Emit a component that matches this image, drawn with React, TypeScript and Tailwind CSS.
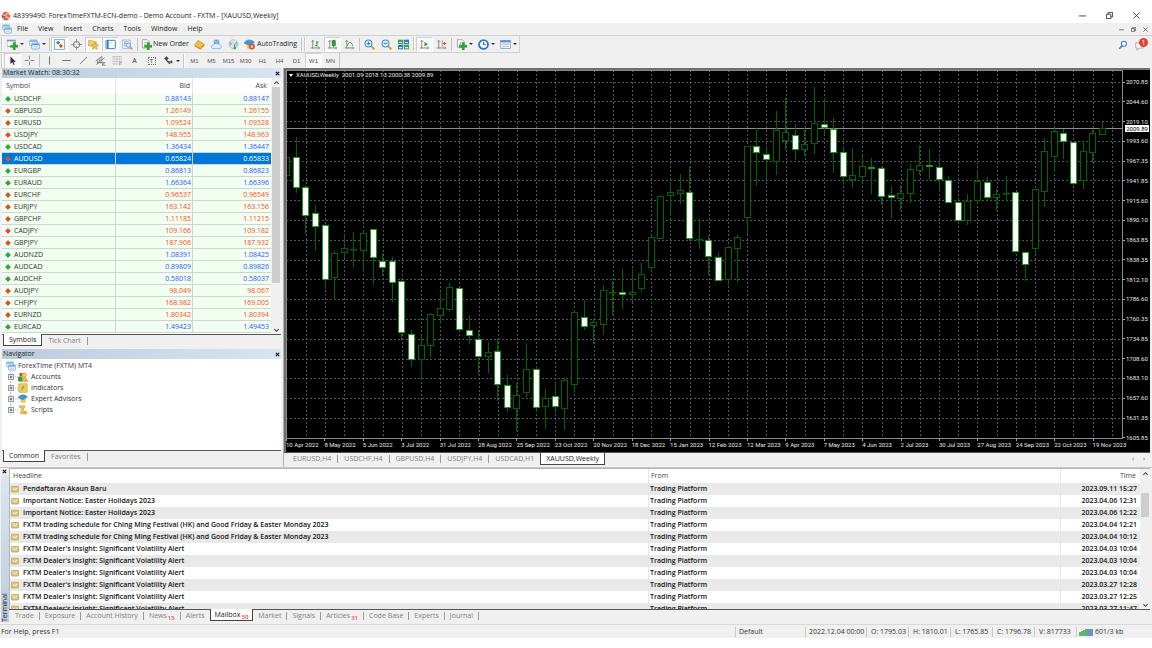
import {Fragment, useState} from 'react'
import type {ReactNode} from 'react'
import clsx from 'clsx'

type Quote = [symbol: string, bid: string, ask: string, up: boolean]
// high, body top, body bottom, low, filled (down week)
type Candle = [number, number, number, number, number]

const quotes: Quote[] = [
    ['USDCHF', '0.88143', '0.88147', true],
    ['GBPUSD', '1.26149', '1.26155', false],
    ['EURUSD', '1.09524', '1.09528', false],
    ['USDJPY', '148.955', '148.963', false],
    ['USDCAD', '1.36434', '1.36447', true],
    ['AUDUSD', '0.65824', '0.65833', false],
    ['EURGBP', '0.86813', '0.86823', true],
    ['EURAUD', '1.66364', '1.66396', true],
    ['EURCHF', '0.96537', '0.96549', false],
    ['EURJPY', '163.142', '163.156', false],
    ['GBPCHF', '1.11185', '1.11215', false],
    ['CADJPY', '109.166', '109.182', false],
    ['GBPJPY', '187.906', '187.932', false],
    ['AUDNZD', '1.08391', '1.08425', true],
    ['AUDCAD', '0.89809', '0.89826', true],
    ['AUDCHF', '0.58018', '0.58037', true],
    ['AUDJPY', '98.049', '98.067', false],
    ['CHFJPY', '168.982', '169.005', false],
    ['EURNZD', '1.80342', '1.80394', false],
    ['EURCAD', '1.49423', '1.49453', true],
]

const mails = [
    ['Pendaftaran Akaun Baru', '2023.09.11 15:27'],
    ['Important Notice: Easter Holidays 2023', '2023.04.06 12:31'],
    ['Important Notice: Easter Holidays 2023', '2023.04.06 12:22'],
    ['FXTM trading schedule for Ching Ming Festival (HK) and Good Friday & Easter Monday 2023', '2023.04.04 12:21'],
    ['FXTM trading schedule for Ching Ming Festival (HK) and Good Friday & Easter Monday 2023', '2023.04.04 10:12'],
    ["FXTM Dealer's Insight: Significant Volatility Alert", '2023.04.03 10:04'],
    ["FXTM Dealer's Insight: Significant Volatility Alert", '2023.04.03 10:04'],
    ["FXTM Dealer's Insight: Significant Volatility Alert", '2023.04.03 10:04'],
    ["FXTM Dealer's Insight: Significant Volatility Alert", '2023.03.27 12:28'],
    ["FXTM Dealer's Insight: Significant Volatility Alert", '2023.03.27 12:25'],
    ["FXTM Dealer's Insight: Significant Volatility Alert", '2023.03.27 11:47'],
]

const prices = [
    '2070.85', '2044.60', '2019.10', '1993.60', '1967.35', '1941.85', '1915.60', '1890.10', '1863.85', '1838.35',
    '1812.10', '1786.60', '1760.35', '1734.85', '1708.60', '1683.10', '1657.60', '1631.35', '1605.85',
]

const dates = [
    '10 Apr 2022', '8 May 2022', '5 Jun 2022', '3 Jul 2022', '31 Jul 2022', '28 Aug 2022', '25 Sep 2022', '23 Oct 2022',
    '20 Nov 2022', '18 Dec 2022', '15 Jan 2023', '12 Feb 2023', '12 Mar 2023', '9 Apr 2023', '7 May 2023', '4 Jun 2023',
    '2 Jul 2023', '30 Jul 2023', '27 Aug 2023', '24 Sep 2023', '22 Oct 2023', '19 Nov 2023',
]

const candles: Candle[] = [
    [150, 157, 176, 182, 0], [137, 157, 188, 193, 1], [185, 187, 216, 234, 1], [205, 213, 227, 251, 1],
    [224, 225, 280, 289, 1], [251, 253, 278, 300, 0], [235, 248, 253, 258, 0], [232, 249, 249, 267, 0],
    [231, 233, 251, 271, 0], [229, 229, 258, 285, 1], [253, 261, 268, 276, 1], [257, 261, 283, 302, 1],
    [279, 281, 333, 341, 1], [330, 334, 360, 367, 1], [335, 345, 360, 380, 0], [313, 314, 346, 357, 0],
    [293, 308, 316, 324, 0], [283, 287, 310, 312, 0], [288, 288, 330, 331, 1], [315, 330, 336, 344, 1],
    [330, 339, 357, 374, 1], [342, 352, 357, 373, 0], [339, 351, 385, 401, 1], [375, 385, 408, 412, 1],
    [383, 395, 409, 431, 0], [343, 369, 393, 397, 0], [366, 369, 408, 412, 1], [389, 398, 407, 429, 0],
    [383, 396, 407, 413, 1], [378, 380, 409, 430, 0], [310, 312, 385, 393, 0], [300, 317, 327, 330, 1],
    [319, 322, 326, 344, 0], [285, 290, 325, 335, 0], [281, 292, 293, 315, 0], [269, 292, 295, 309, 1],
    [269, 292, 295, 302, 0], [263, 274, 289, 292, 0], [235, 237, 268, 271, 0], [195, 196, 239, 239, 0],
    [183, 192, 196, 215, 0], [174, 190, 194, 204, 0], [167, 192, 239, 241, 1], [219, 239, 240, 249, 0],
    [235, 240, 257, 275, 1], [252, 257, 281, 281, 1], [246, 247, 280, 285, 0], [235, 237, 249, 282, 0],
    [146, 146, 218, 234, 0], [128, 146, 153, 186, 1], [145, 154, 160, 179, 1], [111, 130, 162, 175, 0],
    [98, 132, 141, 150, 0], [124, 135, 150, 160, 1], [128, 144, 150, 156, 0], [87, 123, 144, 154, 0],
    [98, 124, 128, 135, 1], [118, 129, 153, 173, 1], [146, 152, 177, 185, 1], [148, 175, 180, 188, 0],
    [156, 166, 177, 183, 0], [158, 167, 169, 194, 1], [167, 168, 197, 205, 1], [186, 195, 198, 218, 1],
    [185, 193, 199, 211, 0], [164, 169, 194, 203, 0], [145, 165, 171, 175, 0], [149, 165, 167, 180, 1],
    [157, 167, 180, 192, 1], [176, 180, 203, 203, 1], [199, 202, 221, 223, 1], [194, 201, 221, 225, 0],
    [171, 181, 201, 203, 0], [177, 182, 198, 200, 1], [189, 194, 198, 211, 0], [176, 193, 194, 202, 0],
    [192, 192, 252, 253, 1], [251, 252, 265, 281, 1], [189, 189, 249, 255, 0], [138, 151, 192, 207, 0],
    [128, 131, 157, 172, 0], [129, 133, 142, 159, 1], [142, 142, 184, 185, 1], [141, 151, 181, 189, 0],
    [130, 133, 153, 163, 0], [122, 128, 135, 135, 0],
]

const plus = <path d="M10 6h3v4h4v3h-4v4h-3v-4H6v-3h4z" transform="translate(-1 -1)" fill="#22b02c" stroke="#0f8a1c" strokeWidth=".6"/>

const axes = <path d="M4 2v12M2 4l2-2 2 2M1 13h13M12 11l2 2-2 2" fill="none" stroke="#777" strokeWidth="1.2"/>

const glass = (
    <>
        <path d="M10 10l5 5" stroke="#d9a520" strokeWidth="3"/>
        <circle cx="6.5" cy="6.5" r="5" fill="#d5ebfb" stroke="#3d8fd1" strokeWidth="1.5"/>
    </>
)

const icons: Record<string, ReactNode> = {
    app: (
        <>
            <circle cx="8" cy="8" r="7" fill="#e2674a"/>
            <path d="M2 5l5 4 3-6 5 3M4 13l4-4 6 3" fill="none" stroke="#fff" strokeWidth="1.4"/>
            <path d="M1 8l6 1-2 5" fill="none" stroke="#8c2c1c" strokeWidth="1"/>
        </>
    ),
    windows: (
        <>
            <rect x="1" y="1.5" width="11" height="8" rx="1" fill="#e8f3fc" stroke="#6aa7d8"/>
            <path d="M1.5 3h10" stroke="#6aa7d8" strokeWidth="2"/>
            <rect x="4" y="6" width="11" height="8.5" rx="1" fill="#fff" stroke="#4f94cf"/>
            <path d="M4.5 8h10" stroke="#4f94cf" strokeWidth="2"/>
            <path d="M6 12l2-1 2 1 3-1" fill="none" stroke="#6aa7d8"/>
        </>
    ),
    newChart: (
        <>
            <rect x="0" y="1.5" width="12" height="9.5" fill="#fff" stroke="#7a94ad"/>
            <path d="M0 2.5h12" stroke="#7a94ad" strokeWidth="2"/>
            {plus}
        </>
    ),
    watch: (
        <>
            <rect x="1" y="1" width="14" height="14" fill="#fff" stroke="#5a9bd5" strokeWidth="1.2"/>
            <path d="M6 2.5L9 5.500 6 8.500 3 5.500z" fill="#22a52c"/>
            <path d="M10 7l3 3-3 3-3-3z" fill="#e0401c"/>
        </>
    ),
    target: (
        <>
            <circle cx="8" cy="8" r="4.5" fill="none" stroke="#888" strokeWidth="1.5"/>
            <path d="M8 0v6M8 10v6M0 8h6M10 8h6" stroke="#888" strokeWidth="1.3"/>
        </>
    ),
    navigator: (
        <>
            <path d="M1 2h5l1 2h5v6H1z" fill="#f3d36b" stroke="#c79a2b"/>
            <path d="M10 5l1.6 3.5 3.9.3-3 2.4 1 3.8-3.5-2-3.5 2 1-3.8-3-2.4 3.900-.3z" fill="#f5c33b" stroke="#b98a18" strokeWidth=".7"/>
        </>
    ),
    terminal: (
        <>
            <rect x="1.5" y="2" width="13.5" height="12" rx="1" fill="#fff" stroke="#2f7fc4" strokeWidth="1.4"/>
            <path d="M4 2v12" stroke="#2f7fc4" strokeWidth="2.5"/>
            <path d="M7 5h3" stroke="#8ab8e0"/>
        </>
    ),
    tester: (
        <>
            <rect x="1" y="1.5" width="11" height="12" fill="#eef5fb" stroke="#8ba6c0"/>
            <path d="M3 4h7M3 6.5h4M3 9h3M4 3v8" stroke="#8ba6c0"/>
            <path d="M11.5 11.500l3.500 3.500" stroke="#d9a520" strokeWidth="2.4"/>
            <circle cx="9.5" cy="9" r="3.2" fill="#cfe6f8" stroke="#4a92cf"/>
        </>
    ),
    order: (
        <>
            <path d="M2 1h7l3 3v9H2z" fill="#fff" stroke="#888"/>
            <path d="M4 5h5M4 7.5h4" stroke="#aaa"/>
            {plus}
        </>
    ),
    editor: (
        <>
            <path d="M6 2l9 6-6 6-8-5z" fill="#f0c03e" stroke="#b98516"/>
            <path d="M1 9l8 5 6-6v2l-6 5.500-8-5z" fill="#c98f1a"/>
        </>
    ),
    cloud: (
        <>
            <path d="M4 1h8v8H4z" fill="#58a9e6"/>
            <path d="M5 2l3 3 3-3" stroke="#d9eefc" fill="none"/>
            <path d="M3 14a2.500 2.500 0 010-5 5 4 0 019-.5A2.800 2.800 0 0113 14z" fill="#e3eef8" stroke="#7ea9cf"/>
        </>
    ),
    signal: (
        <>
            <circle cx="8" cy="7.5" r="6.500" fill="#dfe7ee" stroke="#9eb0bf"/>
            <path d="M4 10a5 5 0 010-6M12 4a5 5 0 010 6M6 9a3 3 0 010-4M10 5a3 3 0 010 4" fill="none" stroke="#6d93b5"/>
            <path d="M9 6l3 9H8z" fill="#33a93c"/>
        </>
    ),
    expert: (
        <>
            <path d="M3 8h10l-1 6H5z" fill="#f2c65b"/>
            <path d="M0 6c3-6 12-6 15-1L8 9z" fill="#3f96d9" stroke="#2a73ad" strokeWidth=".7"/>
        </>
    ),
    auto: (
        <>
            <path d="M3 8h10l-1 6H5z" fill="#f2c65b"/>
            <path d="M0 6c3-6 12-6 15-1L8 9z" fill="#3f96d9" stroke="#2a73ad" strokeWidth=".7"/>
            <circle cx="11.500" cy="11" r="4.300" fill="#e04a20"/>
            <rect x="10" y="9.500" width="3" height="3" fill="#fff"/>
        </>
    ),
    bars: <>{axes}<path d="M10 3v8M10 4.500h2.500M7.500 9.500H10" fill="none" stroke="#1e9b2a" strokeWidth="1.4"/></>,
    candle: <>{axes}<path d="M9.500 1v11" stroke="#14801f"/><rect x="7.500" y="2.500" width="4.500" height="7" fill="#1fae2c" stroke="#14801f"/></>,
    line: <>{axes}<path d="M5 10c2-7 5-7 8 0" fill="none" stroke="#33a93c" strokeWidth="1.4"/></>,
    zoomIn: <>{glass}<path d="M4 6.500h5M6.500 4v5" stroke="#2674b8" strokeWidth="1.3"/></>,
    zoomOut: <>{glass}<path d="M4 6.500h5" stroke="#2674b8" strokeWidth="1.3"/></>,
    tile: (
        <>
            <rect x="0" y="1" width="7.500" height="6.500" fill="#3aa544"/>
            <rect x="8.500" y="1" width="7.500" height="6.500" fill="#2f78c8"/>
            <rect x="0" y="8.500" width="7.500" height="6.500" fill="#2f78c8"/>
            <rect x="8.500" y="8.500" width="7.500" height="6.500" fill="#3aa544"/>
            <path d="M1.500 5h4.500M10 5h4.500M1.500 12.500h4.500M10 12.500h4.500" stroke="#e6f2e8" strokeWidth="1.600"/>
        </>
    ),
    scroll: <>{axes}<path d="M8 4l5 3.500L8 11z" fill="#2aa336"/></>,
    shift: <>{axes}<path d="M9 2v9" stroke="#777"/><path d="M15 6.500h-4M13 4.500l-2.500 2 2.500 2" fill="none" stroke="#d13b2a" strokeWidth="1.3"/></>,
    indicator: (
        <>
            <path d="M2 1h7l3 3v8H2z" fill="#fff" stroke="#888"/>
            <path d="M5 10c1 0 1-6 3-6" fill="none" stroke="#555"/>
            {plus}
        </>
    ),
    clock: (
        <>
            <circle cx="8" cy="8" r="6.500" fill="#f4faff" stroke="#1e7ad0" strokeWidth="2.600"/>
            <path d="M8 4.500V8h3" fill="none" stroke="#333" strokeWidth="1.2"/>
        </>
    ),
    template: (
        <>
            <rect x="1" y="2" width="14" height="12" fill="#fff" stroke="#4f94cf"/>
            <path d="M1 3.500h14" stroke="#4f94cf" strokeWidth="3"/>
            <path d="M3 8l3-1 3 1 4-1" fill="none" stroke="#d45"/>
            <path d="M3 12l3-1.500 3 1 4-1.500" fill="none" stroke="#3a9"/>
        </>
    ),
    cursor: <path d="M5 2v11l2.700-2.500 1.800 4 1.700-.8-1.800-3.700H13z" fill="#333"/>,
    cross: <path d="M8 1v5.500M8 9.500V15M1 8h5.500M9.500 8H15" stroke="#777" strokeWidth="1.3"/>,
    vline: <path d="M8 2v12" stroke="#666" strokeWidth="1.3"/>,
    hline: <path d="M2 8h12" stroke="#666" strokeWidth="1.3"/>,
    trend: <path d="M3 13L13 3" stroke="#666" strokeWidth="1.3"/>,
    channel: <path d="M1 9l9-7M2 14L14 4M4 6v7M7 4v8M10 2v8M3 11h8M15 11h-4v4h4M11 13h3" fill="none" stroke="#666"/>,
    fibo: <path d="M1 2.500h13M1 6h13M1 9.500h13M1 13h8M11 15v-4h4M11 13h3" fill="none" stroke="#777" strokeDasharray="1.5 .8"/>,
    arrows: <path d="M2 5l3-3 3 3-3 3zM5 7c0 4 3 4 5 3M10 10l2-2 2 2-2 2zM7 11l3-2v4z" fill="#444" stroke="#444" strokeWidth=".6"/>,
    search: <><path d="M2 14l5-5" stroke="#2a7fd4" strokeWidth="2.4"/><circle cx="9.500" cy="6" r="4" fill="#fff" stroke="#2a7fd4" strokeWidth="1.7"/></>,
    accounts: (
        <>
            <circle cx="5" cy="4" r="3" fill="#d94c2c"/>
            <circle cx="10" cy="5" r="3.500" fill="#f2cf68" stroke="#b88f24"/>
            <path d="M5 15c0-8 10-8 10.500 0z" fill="#efc14a" stroke="#b88f24"/>
            <rect x="0" y="7" width="7" height="8" rx="2" fill="#2ca338"/>
        </>
    ),
    func: (
        <>
            <rect x="1" y="1" width="14" height="14" rx="2" fill="#ecca66" stroke="#cfa93e"/>
            <path d="M10 4c-3 0-2 8-5 8M6 7.500h4" fill="none" stroke="#8f7020"/>
        </>
    ),
    script: (
        <>
            <path d="M2 1h9v3H9v7h3v3H4v-3h1V4H2z" fill="#eac458" stroke="#b88f24" strokeWidth=".7"/>
            <path d="M12 9l3 3-3 3-3-3z" fill="#f0b92e" stroke="#b88f24" strokeWidth=".7"/>
        </>
    ),
    mail: (
        <>
            <rect x="1" y="3" width="14" height="11" rx="1" fill="#dcc77a" stroke="#b59b48" strokeWidth="1.4"/>
            <path d="M2.500 5.500L8 9.500l5.500-4" fill="none" stroke="#fff" strokeWidth="1.5"/>
        </>
    ),
}

function Icon({name, className = 'size-[11px]'}: { name: string; className?: string }) {
    return <svg viewBox="0 0 16 16" className={clsx('shrink-0', className)} aria-hidden="true">{icons[name]}</svg>
}

function Tool({icon, label, pressed, drop, children}: {
    icon?: string; label: string; pressed?: boolean; drop?: boolean; children?: ReactNode
}) {
    return (
        <button
            type="button"
            aria-label={label}
            className={clsx(
                'flex h-[15px] shrink-0 items-center justify-center gap-[2px] border',
                drop ? 'w-[22px]' : 'w-[17px]',
                pressed ? 'border-[#d0d0d0] border-r-white border-b-white bg-[#f8f8f8]' : 'border-transparent',
            )}
        >
            {icon && <Icon name={icon}/>}
            {children}
            {drop && <span className="border-x-2 border-t-2 border-x-transparent border-t-[#333]"/>}
        </button>
    )
}

function Sep() {
    return <span className="mx-px h-[13px] w-px shrink-0 bg-[#c4c4c4]"/>
}

function Grip() {
    return <span className="mx-px h-[14px] w-[2px] shrink-0 border-x border-l-[#c8c8c8] border-r-white"/>
}

function PaneTitle({children}: { children: ReactNode }) {
    return (
        <div className="flex h-[10px] items-center justify-between bg-linear-to-r from-[#bccbdc] to-[#d8e4f1] pl-px text-[#222]">
            <h2 className="leading-[10px]">{children}</h2>
            <button type="button" aria-label="Close" className="px-px">
                <svg viewBox="0 0 6 6" className="size-[5px]"><path d="M1 1l4 4M5 1L1 5" stroke="#111" strokeWidth="1.4"/></svg>
            </button>
        </div>
    )
}

function Tabs({items, active, onPick, tight}: {
    items: [string, string?][]; active: string; onPick: (name: string) => void; tight?: boolean
}) {
    return (
        <div className="flex h-[13px] items-start border-t border-[#555] pl-px text-[#808080]">
            {items.map(([name, count], i) => (
                <Fragment key={name}>
                    <button
                        type="button"
                        onClick={() => onPick(name)}
                        className={clsx(
                            'flex h-3 items-center whitespace-nowrap',
                            tight ? 'px-1' : 'px-[5px]',
                            name === active ? '-mt-px border border-t-0 border-[#444] bg-white text-[#222]' : 'border-x border-transparent',
                        )}
                    >
                        {name}
                        {count && <span className="ml-px pt-1 text-[6px] leading-[6px] font-semibold text-[#f0452c]">{count}</span>}
                    </button>
                    {name !== active && items[i + 1]?.[0] !== active && <span className="mt-[2px] h-2 w-px bg-[#999]"/>}
                </Fragment>
            ))}
        </div>
    )
}

function ScrollBar({thumb}: { thumb: string }) {
    return (
        <div className="flex w-[10px] flex-col items-center bg-[#f0f0f0]">
            <svg viewBox="0 0 8 8" className="my-px size-[7px]"><path d="M1.500 5.500L4 3l2.500 2.500" fill="none" stroke="#444" strokeWidth="1.2"/></svg>
            <div className={clsx('w-2 bg-[#cdcdcd]', thumb)}/>
            <svg viewBox="0 0 8 8" className="mt-auto size-[7px]"><path d="M1.500 2.500L4 5l2.500-2.500" fill="none" stroke="#444" strokeWidth="1.2"/></svg>
        </div>
    )
}

function MarketWatch() {
    const [tab, setTab] = useState('Symbols')
    const [selected, setSelected] = useState('AUDUSD')

    return (
        <section>
            <PaneTitle>Market Watch: 08:30:32</PaneTitle>
            <div className="flex h-[256px] overflow-hidden bg-white">
                <table className="h-fit flex-1 table-fixed border-separate border-spacing-0">
                    <thead>
                    <tr className="h-[15px] text-[#444]">
                        <th className="border-r border-[#e5e5e5] pl-1 text-left font-normal">Symbol</th>
                        <th className="w-[77px] border-r border-[#e5e5e5] pr-[2px] text-right font-normal">Bid</th>
                        <th className="w-[78px] pr-1 text-right font-normal">Ask</th>
                    </tr>
                    </thead>
                    <tbody className="leading-[11px]">
                    {quotes.map(([symbol, bid, ask, up]) => {
                        const current = symbol === selected
                        const cell = clsx('border-b border-[#d3d3d3] py-0', current ? 'bg-[#0078d7]' : 'bg-[#f0fff0]')
                        const price = current ? 'text-white' : up ? 'text-[#3c50ff]' : 'text-[#ff4a2c]'
                        return (
                            <tr key={symbol} onClick={() => setSelected(symbol)}>
                                <td className={clsx(cell, 'border-r pl-[3px]', current && 'text-white')}>
                                    <span className="flex items-center gap-[3px]">
                                        <svg viewBox="0 0 6 6" className="size-[6px]">
                                            <path d="M3 0l1.300 1.500L6 3 4.300 4.500 3 6 1.700 4.500 0 3l1.700-1.500z" fill={up ? '#2fa53a' : '#d9502c'}/>
                                        </svg>
                                        {symbol}
                                    </span>
                                </td>
                                <td className={clsx(cell, price, 'border-r pr-px text-right')}>{bid}</td>
                                <td className={clsx(cell, price, 'pr-[2px] text-right')}>{ask}</td>
                            </tr>
                        )
                    })}
                    </tbody>
                </table>
                <ScrollBar thumb="h-[196px]"/>
            </div>
            <Tabs items={[['Symbols'], ['Tick Chart']]} active={tab} onPick={setTab}/>
        </section>
    )
}

const tree = [
    ['Accounts', 'accounts'],
    ['Indicators', 'func'],
    ['Expert Advisors', 'expert'],
    ['Scripts', 'script'],
]

function Navigator() {
    const [tab, setTab] = useState('Common')

    return (
        <section className="flex flex-1 flex-col">
            <PaneTitle>Navigator</PaneTitle>
            <div className="flex-1 bg-white pt-px pl-1 leading-[11px]">
                <div className="flex items-center gap-[2px]">
                    <Icon name="windows" className="size-[10px]"/>
                    ForexTime (FXTM) MT4
                </div>
                <ul>
                    {tree.map(([name, icon]) => (
                        <li key={name} className="flex items-center pl-[2px]">
                            <svg viewBox="0 0 10 11" className="h-[11px] w-[10px]">
                                <path d="M2.500 0v11M5 6h5" stroke="#bbb" strokeDasharray="1 1"/>
                                <rect x=".5" y="3.500" width="5" height="5" fill="#fff" stroke="#9a9a9a"/>
                                <path d="M1.500 6h3M3 4.500v3" stroke="#35609b"/>
                            </svg>
                            <Icon name={icon} className="mr-[3px] size-[10px]"/>
                            {name}
                        </li>
                    ))}
                </ul>
            </div>
            <Tabs items={[['Common'], ['Favorites']]} active={tab} onPick={setTab}/>
        </section>
    )
}

const chartTabs = ['EURUSD,H4', 'USDCHF,H4', 'GBPUSD,H4', 'USDJPY,H4', 'USDCAD,H1', 'XAUUSD,Weekly']

function Plot() {
    return (
        <svg viewBox="286 70 837 369" className="block h-auto w-full" role="img" aria-label="XAUUSD weekly candles">
            <g stroke="#50585f" strokeWidth="1" strokeDasharray="2 2">
                {prices.map((p, i) => {
                    const y = Math.round(81.5 + i * 19.79) + 0.5
                    return <path key={p} d={`M286 ${y}H1123`}/>
                })}
                {Array.from({length: 43}, (_, i) => {
                    const x = Math.round(305.8 + i * 19.19) + 0.5
                    return <path key={i} d={`M${x} 70V439`}/>
                })}
            </g>
            <path d="M286 128.500H1123" stroke="#8c8c8c"/>
            {candles.map(([high, top, bottom, low, filled], i) => {
                const x = Math.round(286.2 + i * 9.595) + 0.5
                return (
                    <g key={i} stroke={filled ? '#12a012' : '#006400'}>
                        <path d={`M${x} ${high}V${low}`} stroke="#006400"/>
                        <rect x={x - 3} y={top + 0.5} width="6" height={Math.max(bottom - top - 1, 0.5)} fill={filled ? '#fff' : '#000'}/>
                    </g>
                )
            })}
            <path d="M286 70.500H1122.500V438.500H286.500V70" fill="none" stroke="#8a8a8a"/>
        </svg>
    )
}

function Chart() {
    const [tab, setTab] = useState('XAUUSD,Weekly')

    return (
        <main className="flex min-w-0 flex-1 flex-col pr-[2px]">
            <div className="relative flex border-t-2 border-l-2 border-[#6e6e6e] bg-black font-['Roboto','Liberation_Sans',sans-serif] text-[6px] leading-[8px] text-[#e8e8e8]">
                <div className="min-w-0 flex-1">
                    <Plot/>
                    <div className="-mr-2 grid h-[13px] auto-cols-fr grid-flow-col whitespace-nowrap">
                        {dates.map((date) => (
                            <span key={date} className="w-0">
                                <span className="block h-[2px] w-px bg-[#aaa]"/>
                                {date}
                            </span>
                        ))}
                    </div>
                </div>
                <div className="flex w-[27px] flex-col justify-between pt-2 pb-[10px]">
                    {prices.map((p) => (
                        <span key={p} className="flex items-center gap-px">
                            <span className="h-px w-[2px] bg-[#aaa]"/>
                            {p}
                        </span>
                    ))}
                </div>
                <span className="absolute top-[55px] right-px bg-white px-px leading-[7px] text-black">2009.89</span>
                <div className="absolute top-px left-[3px] flex items-center gap-[3px]">
                    <span className="border-x-2 border-t-[3px] border-x-transparent border-t-white"/>
                    <span className="whitespace-pre">XAUUSD,Weekly  2001.09 2018.13 2000.38 2009.89</span>
                </div>
            </div>
            <div className="flex h-[15px] items-start border-t border-[#555] pl-[3px] text-[#808080]">
                {chartTabs.map((name, i) => (
                    <Fragment key={name}>
                        <button
                            type="button"
                            onClick={() => setTab(name)}
                            className={clsx(
                                'h-3 px-[5px] leading-[12px] whitespace-nowrap',
                                name === tab ? 'border-x border-b border-[#444] bg-white text-[#222]' : 'border-x border-transparent',
                            )}
                        >
                            {name}
                        </button>
                        {name !== tab && chartTabs[i + 1] !== tab && <span className="mt-[2px] h-2 w-px bg-[#999]"/>}
                    </Fragment>
                ))}
                <span className="ml-auto flex gap-[5px] pr-[3px] text-[#555]">
                    <button type="button" aria-label="Scroll left" className="w-[6px] leading-[11px]">‹</button>
                    <button type="button" aria-label="Scroll right" className="w-[6px] leading-[11px]">›</button>
                </span>
            </div>
        </main>
    )
}

const terminalTabs: [string, string?][] = [
    ['Trade'], ['Exposure'], ['Account History'], ['News', '15'], ['Alerts'], ['Mailbox', '50'], ['Market'],
    ['Signals'], ['Articles', '31'], ['Code Base'], ['Experts'], ['Journal'],
]

function Terminal() {
    const [tab, setTab] = useState('Mailbox')

    return (
        <section className="flex border-t border-[#c8c8c8] pr-[2px]">
            <div className="flex w-[9px] flex-col items-center">
                <button type="button" aria-label="Close" className="p-px">
                    <svg viewBox="0 0 6 6" className="size-[5px]"><path d="M1 1l4 4M5 1L1 5" stroke="#111" strokeWidth="1.4"/></svg>
                </button>
                <div className="flex w-2 flex-1 flex-col items-center justify-end bg-linear-to-b from-[#dbe6f2] to-[#bccbdc] text-[#222]">
                    <h2 className="h-[30px] rotate-180 text-left leading-[8px] [writing-mode:vertical-rl]">Terminal</h2>
                </div>
            </div>
            <div className="min-w-0 flex-1">
                <div className="flex h-[141px] overflow-hidden border-t border-l border-[#b5b5b5] bg-white">
                    <table className="h-fit flex-1 table-fixed border-separate border-spacing-0">
                        <thead>
                        <tr className="h-[14px] text-[#444]">
                            <th className="border-r border-[#e5e5e5] pl-[3px] text-left font-normal">Headline</th>
                            <th className="w-[412px] border-r border-[#e5e5e5] pl-[2px] text-left font-normal">From</th>
                            <th className="w-[79px] pr-1 text-right font-normal">Time</th>
                        </tr>
                        </thead>
                        <tbody className="leading-[12px] font-semibold text-[#111]">
                        {mails.map(([headline, time], i) => (
                            <tr key={i} className="odd:bg-[#e9e9e9]">
                                <td className="border-r border-[#e5e5e5] py-0">
                                    <span className="flex items-center gap-1 pl-px whitespace-nowrap">
                                        <Icon name="mail" className="size-[8px]"/>
                                        {headline}
                                    </span>
                                </td>
                                <td className="border-r border-[#e5e5e5] py-0 pl-px">Trading Platform</td>
                                <td className="py-0 pr-[3px] text-right">{time}</td>
                            </tr>
                        ))}
                        </tbody>
                    </table>
                    <ScrollBar thumb="mt-[15px] h-6"/>
                </div>
                <Tabs items={terminalTabs} active={tab} onPick={setTab} tight/>
            </div>
        </section>
    )
}

const periods = ['M1', 'M5', 'M15', 'M30', 'H1', 'H4', 'D1', 'W1', 'MN']

function Toolbars() {
    return (
        <>
            <div className="flex h-[18px] items-center border-t border-[#d0d0d0]">
                <div className="flex h-full items-center border-r border-b border-[#d0d0d0]">
                    <Grip/>
                    <Tool icon="newChart" label="New chart" drop/>
                    <Tool icon="windows" label="Profiles" drop/>
                    <Sep/>
                    <Tool icon="watch" label="Market Watch" pressed/>
                    <Tool icon="target" label="Data Window"/>
                    <Tool icon="navigator" label="Navigator" pressed/>
                    <Tool icon="terminal" label="Terminal" pressed/>
                    <Tool icon="tester" label="Strategy Tester"/>
                    <Sep/>
                    <button type="button" className="flex w-[52px] items-center gap-px pl-[2px] whitespace-nowrap text-[#222]">
                        <Icon name="order"/>New Order
                    </button>
                    <Tool icon="editor" label="MetaEditor"/>
                    <Tool icon="cloud" label="Virtual Hosting"/>
                    <Tool icon="signal" label="Signals"/>
                    <button type="button" className="flex w-[58px] items-center gap-[2px] pl-[2px] whitespace-nowrap text-[#222]">
                        <Icon name="auto"/>AutoTrading
                    </button>
                    <Sep/>
                    <Grip/>
                    <Tool icon="bars" label="Bar Chart"/>
                    <Tool icon="candle" label="Candlesticks" pressed/>
                    <Tool icon="line" label="Line Chart"/>
                    <Sep/>
                    <Tool icon="zoomIn" label="Zoom In"/>
                    <Tool icon="zoomOut" label="Zoom Out"/>
                    <Tool icon="tile" label="Tile Windows"/>
                    <Grip/>
                    <Tool icon="scroll" label="Auto Scroll" pressed/>
                    <Tool icon="shift" label="Chart Shift"/>
                    <Sep/>
                    <Tool icon="indicator" label="Indicators" drop/>
                    <Tool icon="clock" label="Periods" drop/>
                    <Tool icon="template" label="Templates" drop/>
                </div>
                <div className="ml-auto flex items-center gap-1 pr-1">
                    <button type="button" aria-label="Search" className="mr-[2px] p-px"><Icon name="search" className="size-[10px]"/></button>
                    <button type="button" aria-label="Messages" className="relative w-[13px]">
                        <svg viewBox="0 0 16 16" className="size-3"><path d="M1 5h10v7H6l-3 3v-3H1z" fill="#f4f4f4" stroke="#999"/></svg>
                        <span className="absolute -top-px right-0 size-[9px] rounded-full bg-[#e0442a] text-[7px] leading-[9px] text-white">1</span>
                    </button>
                </div>
            </div>
            <div className="flex h-[15px] items-center">
                <div className="flex h-full items-center border-r border-[#c4c4c4]">
                    <Grip/>
                    <Tool icon="cursor" label="Cursor" pressed/>
                    <Tool icon="cross" label="Crosshair"/>
                    <Sep/>
                    <Tool icon="vline" label="Vertical Line"/>
                    <Tool icon="hline" label="Horizontal Line"/>
                    <Tool icon="trend" label="Trendline"/>
                    <Tool icon="channel" label="Equidistant Channel"/>
                    <Tool icon="fibo" label="Fibonacci Retracement"/>
                    <Tool label="Text">A</Tool>
                    <Tool label="Text Label">
                        <span className="size-[8px] border border-dotted border-[#777] text-[6px] leading-[6px]">T</span>
                    </Tool>
                    <Tool icon="arrows" label="Arrows" drop/>
                    <Grip/>
                    {periods.map((p) => (
                        <Tool key={p} label={p} pressed={p === 'W1'}>
                            <span className="font-['Liberation_Sans',sans-serif] text-[6px] text-[#555]">{p}</span>
                        </Tool>
                    ))}
                </div>
            </div>
        </>
    )
}

function WindowButtons({small}: { small?: boolean }) {
    const paths = ['M0 4.500h8', 'M.5 2.500h5v5h-5zM2.500 2.500v-2h5v5h-2', 'M.5.5l7 7M7.500.5l-7 7']
    return (
        <div className={clsx('ml-auto flex items-center', small ? 'gap-[7px] pr-1' : 'gap-5 pt-[7px] pr-3')}>
            {['Minimize', 'Restore', 'Close'].map((label, i) => (
                <button key={label} type="button" aria-label={label}>
                    <svg viewBox="0 0 8 8" className={small ? 'size-[5px]' : 'size-[7px]'}>
                        <path d={paths[i]} fill="none" stroke="#333"/>
                    </svg>
                </button>
            ))}
        </div>
    )
}

export default function App() {
    return (
        <div className="min-h-screen bg-white font-['Open_Sans','Noto_Sans',sans-serif] text-[7px] leading-[10px] text-[#333]">
            <div className="bg-[#f0f0f0]">
                <header>
                    <div className="flex h-[23px] items-center bg-white pl-px">
                        <h1 className="flex items-center gap-[2px] pt-[9px] text-[#222]">
                            <Icon name="app" className="size-[10px]"/>
                            48399490: ForexTimeFXTM-ECN-demo - Demo Account - FXTM - [XAUUSD,Weekly]
                        </h1>
                        <WindowButtons/>
                    </div>
                    <nav className="flex h-3 items-center pl-[2px] text-[#222]">
                        <Icon name="windows" className="size-[10px]"/>
                        {['File', 'View', 'Insert', 'Charts', 'Tools', 'Window', 'Help'].map((name) => (
                            <button key={name} type="button" className="px-[5px]">{name}</button>
                        ))}
                        <WindowButtons small/>
                    </nav>
                </header>
                <Toolbars/>
                <div className="flex">
                    <aside className="flex w-[284px] shrink-0 flex-col gap-[2px] border-r border-[#b0b0b0] pr-[2px] pb-1 pl-[2px]">
                        <MarketWatch/>
                        <Navigator/>
                    </aside>
                    <Chart/>
                </div>
                <Terminal/>
                <footer className="mt-[2px] flex h-[14px] items-center border-t border-[#d8d8d8] pl-px whitespace-nowrap">
                    <span className="mr-auto">For Help, press F1</span>
                    <span className="w-[70px] border-l border-[#c8c8c8] pl-[3px]">Default</span>
                    <span className="w-[61px] border-l border-[#c8c8c8] pl-[3px]">2022.12.04 00:00</span>
                    {['O: 1795.03', 'H: 1810.01', 'L: 1765.85', 'C: 1796.78', 'V: 817733'].map((v) => (
                        <span key={v} className="w-[42px] border-l border-[#c8c8c8] pl-1">{v}</span>
                    ))}
                    <span className="flex w-[76px] items-center gap-[2px] border-l border-[#c8c8c8] pl-[2px]">
                        <svg viewBox="0 0 14 8" className="h-2 w-[14px]">
                            <path d="M1 8V4M3 8V3M5 8V2M7 8V1" stroke="#1f9c3a" strokeWidth="1.4"/>
                            <path d="M9 8V1M11 8V1M13 8V1" stroke="#2b6cb8" strokeWidth="1.4"/>
                        </svg>
                        601/3 kb
                    </span>
                </footer>
            </div>
        </div>
    )
}
